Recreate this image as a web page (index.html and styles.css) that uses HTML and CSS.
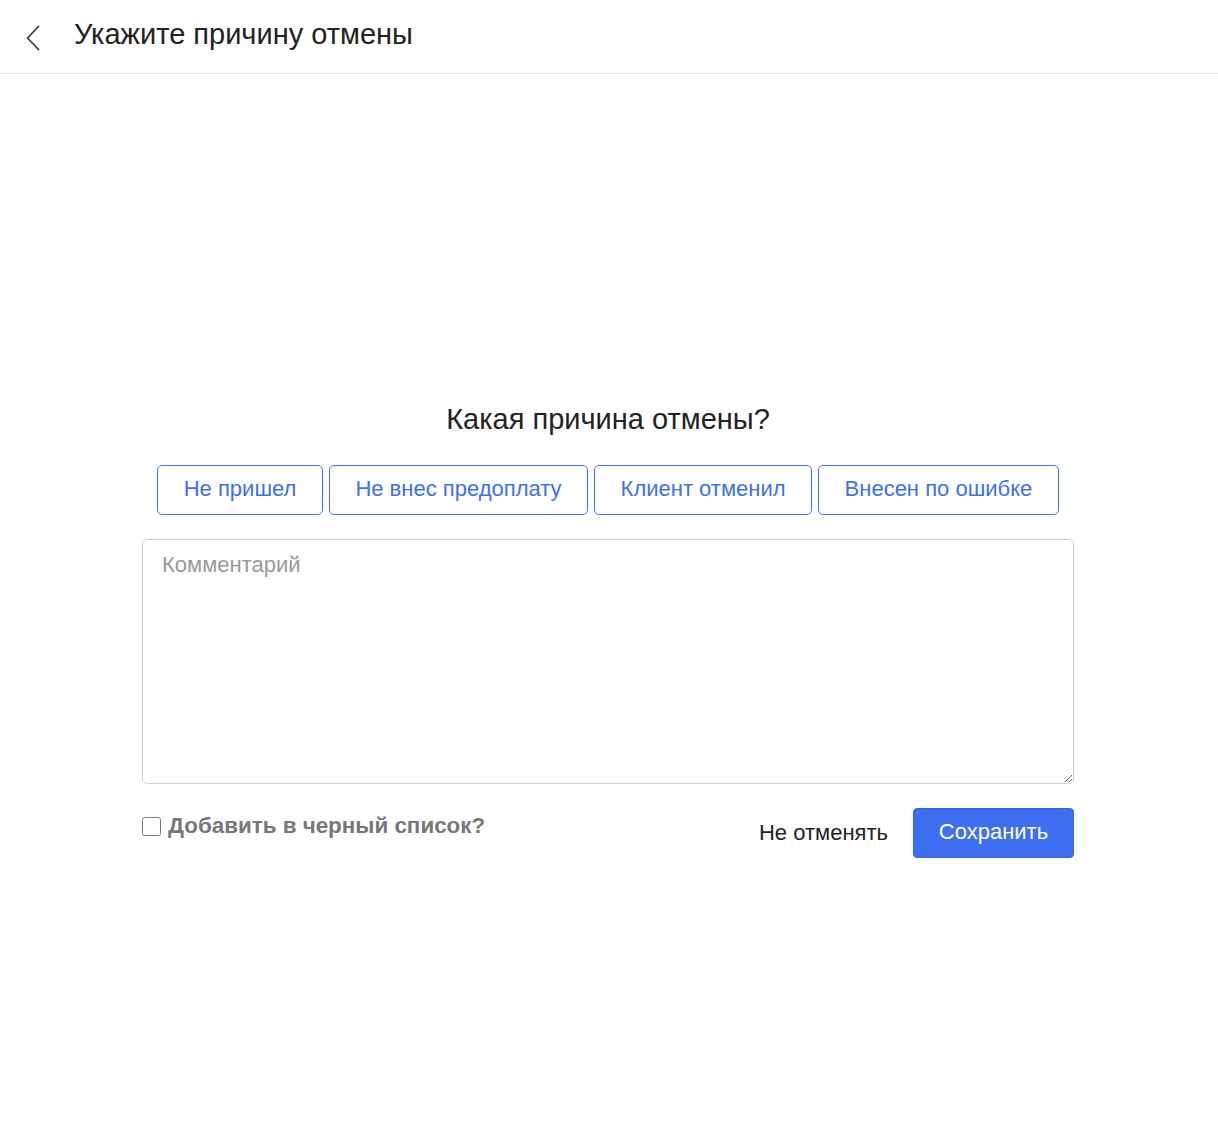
FILE: index.html
```html
<!DOCTYPE html>
<html lang="ru">
<head>
<meta charset="utf-8">
<title>Укажите причину отмены</title>
<link rel="stylesheet" href="styles.css">
</head>
<body>
<header class="topbar">
  <button class="back" aria-label="Назад">
    <svg width="16" height="26" viewBox="0 0 16 26"><path d="M13.5 1.5 L2.5 13 L13.5 24.5" fill="none" stroke="#3a3a3a" stroke-width="1.8" stroke-linecap="round" stroke-linejoin="round"/></svg>
  </button>
  <h1 class="title">Укажите причину отмены</h1>
</header>
<main class="content">
  <section class="form">
    <h2 class="question">Какая причина отмены?</h2>
    <div class="reasons">
      <button class="reason">Не пришел</button>
      <button class="reason">Не внес предоплату</button>
      <button class="reason">Клиент отменил</button>
      <button class="reason">Внесен по ошибке</button>
    </div>
    <textarea class="comment" placeholder="Комментарий"></textarea>
    <div class="actions">
      <label class="blacklist"><input type="checkbox" class="check"><span>Добавить в черный список?</span></label>
      <div class="buttons">
        <button class="cancel">Не отменять</button>
        <button class="save">Сохранить</button>
      </div>
    </div>
  </section>
</main>
</body>
</html>
```

FILE: styles.css
```css
* { box-sizing: border-box; }
html, body { margin: 0; padding: 0; background: #fff; }
body {
  font-family: "Liberation Sans", Arial, sans-serif;
  color: #222;
}
.topbar {
  height: 74px;
  border-bottom: 1px solid #e6e6e6;
  display: flex;
  align-items: center;
  padding-left: 24px;
  padding-bottom: 4px;
}
.back {
  border: 0;
  background: none;
  padding: 0;
  width: 18px;
  height: 28px;
  display: flex;
  align-items: center;
  justify-content: center;
  margin-right: 32px;
  margin-top: 6px;
  cursor: pointer;
}
.title {
  margin: 0;
  font-size: 29px;
  font-weight: 400;
  color: #222;
}
.content {
  display: flex;
  justify-content: center;
  padding-top: 328px;
  padding-right: 2px;
}
.form {
  width: 932px;
  display: flex;
  flex-direction: column;
  align-items: center;
}
.question {
  margin: 0;
  font-size: 29px;
  font-weight: 400;
  color: #222;
  line-height: 34px;
}
.reasons {
  display: flex;
  gap: 6px;
  margin-top: 29px;
}
.reason {
  height: 50px;
  padding: 0 25.5px 3px;
  border: 1px solid #3d6ff0;
  border-radius: 5px;
  background: #fff;
  color: #3d6ff0;
  font-family: inherit;
  font-size: 22px;
}
.comment {
  margin-top: 24px;
  width: 100%;
  height: 245px;
  border: 1px solid #cfcfcf;
  border-radius: 5px;
  padding: 12px 19px;
  font-family: inherit;
  font-size: 22px;
  color: #222;
  resize: vertical;
}
.comment::placeholder { color: #999; }
.actions {
  width: 100%;
  display: flex;
  justify-content: space-between;
  align-items: flex-start;
  margin-top: 24px;
}
.blacklist {
  display: flex;
  align-items: center;
  margin-top: 5px;
  font-size: 22.4px;
  font-weight: 700;
  color: #777;
}
.check {
  margin: 0 7px 0 0;
  width: 19px;
  height: 19px;
}
.buttons {
  display: flex;
  align-items: center;
  gap: 25px;
}
.cancel {
  border: 0;
  background: none;
  padding: 0;
  font-family: inherit;
  font-size: 22px;
  color: #222;
}
.save {
  width: 161px;
  height: 50px;
  border: 1px solid #3468e6;
  border-radius: 4px;
  background: #3d6ff0;
  color: #fff;
  font-family: inherit;
  font-size: 22px;
  padding-bottom: 4px;
}
```
